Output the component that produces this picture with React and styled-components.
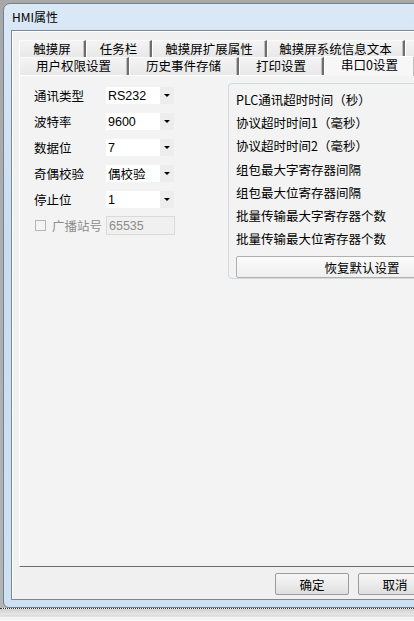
import React from "react";
import styled, { createGlobalStyle } from "styled-components";

const GlobalStyle = createGlobalStyle`
  html, body { margin: 0; padding: 0; }
  body {
    background: #c9c9c9;
    font-family: "Liberation Sans", "Noto Sans CJK SC", sans-serif;
    font-size: 12px;
    color: #000;
  }
`;

const Screen = styled.div`
  width: 414px;
  height: 621px;
  overflow: hidden;
  position: relative;
  background: linear-gradient(#a8a8a8, #b4b4b4);
`;

const Window = styled.div`
  margin: 3px 0 0 3px;
  width: 500px;
  height: 605px;
  box-sizing: border-box;
  border: 1px solid #6f8296;
  border-radius: 7px 7px 6px 6px;
  background: linear-gradient(180deg, #dbe8f6 0%, #c9dcf1 40%, #cfe0f3 100%);
  padding: 0 0 7px 7px;
  display: flex;
  flex-direction: column;
`;

const TitleBar = styled.div`
  height: 26px;
  display: flex;
  align-items: center;
  padding-left: 1px;
  padding-bottom: 2px;
  box-sizing: border-box;
  font-family: "Noto Sans CJK SC", sans-serif;
  font-size: 12px;
`;

const Client = styled.div`
  flex: 1;
  border: 1px solid #7a8797;
  border-right: none;
  background: #f0f0f0;
  padding: 9px 0 0 6px;
  display: flex;
  flex-direction: column;
  box-shadow: inset 1px 1px 0 #ffffff;
`;

const TabRow = styled.div`
  display: flex;
  height: ${(p) => p.h}px;
  align-items: flex-end;
  padding-left: 1px;
`;

const Tab = styled.div`
  width: ${(p) => p.w}px;
  height: ${(p) => (p.selected ? p.h + 2 : p.h)}px;
  box-sizing: border-box;
  flex-shrink: 0;
  display: flex;
  align-items: center;
  justify-content: center;
  font-family: "Noto Sans CJK SC", sans-serif;
  font-size: 12.5px;
  line-height: 1;
  padding-bottom: ${(p) => (p.selected ? 2 : 0)}px;
  background: ${(p) =>
    p.selected ? "#f7f7f7" : "linear-gradient(#f4f4f4, #e8e8e8)"};
  border-left: 1px solid #ffffff;
  border-top: 1px solid ${(p) => (p.selected ? "#fff" : "#fafafa")};
  border-right: 2px solid ${(p) => (p.selected ? "#d8d8d8" : "#6e6e6e")};
  box-shadow: inset -1px 0 0 #c0c0c0;
  margin-bottom: ${(p) => (p.selected ? -1 : 0)}px;
  position: relative;
  z-index: ${(p) => (p.selected ? 2 : 1)};
`;

const Panel = styled.div`
  height: 492px;
  box-sizing: border-box;
  border-left: 1px solid #ffffff;
  border-top: 1px solid #ffffff;
  border-bottom: 1px solid #6c6c6c;
  background: #f3f3f3;
  margin-left: 1px;
  display: flex;
  align-items: flex-start;
  position: relative;
  z-index: 1;
`;

const Form = styled.div`
  margin: 10px 0 0 14px;
  width: 180px;
  display: grid;
  grid-template-columns: 71px 70px;
  row-gap: 7px;
  align-items: center;
  font-family: "Noto Sans CJK SC", sans-serif;
  font-size: 12.5px;
`;

const Label = styled.div`
  height: 19px;
  display: flex;
  align-items: center;
  color: ${(p) => (p.disabled ? "#8d8d8d" : "#000")};
  gap: 6px;
`;

const Select = styled.div`
  height: 19px;
  box-sizing: border-box;
  background: #ffffff;
  border: 1px solid #f3f3f3;
  display: flex;
  align-items: center;
  justify-content: space-between;
  padding-left: 2px;
  font-family: ${(p) =>
    p.cjk ? '"Noto Sans CJK SC", sans-serif' : '"Liberation Sans", sans-serif'};
  font-size: 12.5px;
`;

const DropBtn = styled.div`
  width: 14px;
  height: 17px;
  background: #ededed;
  display: flex;
  align-items: center;
  justify-content: center;
  &::after {
    content: "";
    border-left: 3px solid transparent;
    border-right: 3px solid transparent;
    border-top: 3px solid #000;
  }
`;

const Check = styled.span`
  width: 11px;
  height: 11px;
  box-sizing: border-box;
  border: 1px solid #b5b5b5;
  background: #f4f4f4;
  margin-left: 1px;
`;

const DisabledInput = styled.div`
  height: 19px;
  box-sizing: border-box;
  border: 1px solid #dadada;
  background: #f0f0f0;
  color: #8d8d8d;
  display: flex;
  align-items: center;
  padding-left: 2px;
  font-family: "Liberation Sans", sans-serif;
  font-size: 12.5px;
  margin-left: 1px;
`;

const Group = styled.div`
  margin: 7px 0 0 14px;
  width: 270px;
  height: 196px;
  box-sizing: border-box;
  border: 1px solid #d3d9de;
  border-radius: 4px;
  padding: 4px 0 0 7px;
  font-family: "Noto Sans CJK SC", sans-serif;
  font-size: 12.5px;
  display: flex;
  flex-direction: column;
`;

const Line = styled.div`
  line-height: 23.2px;
  height: 23.2px;
`;

const Button = styled.div`
  width: ${(p) => p.w}px;
  height: 22px;
  box-sizing: border-box;
  border: 1px solid #9c9c9c;
  border-radius: 2px;
  background: linear-gradient(#f6f6f6 0%, #ececec 50%, #dedede 100%);
  display: flex;
  align-items: center;
  justify-content: center;
  font-family: "Noto Sans CJK SC", sans-serif;
  font-size: 12.5px;
  flex-shrink: 0;
`;

const GroupButton = styled(Button)`
  margin-top: 6px;
  background: linear-gradient(#fbfbfb, #efefef);
  border-color: #b0b0b0;
`;

const Footer = styled.div`
  display: flex;
  gap: 9px;
  padding: 6px 0 0 257px;
`;

const Ground = styled.div`
  position: absolute;
  left: 0;
  right: 0;
  top: 608px;
  height: 13px;
  background: linear-gradient(#d0d0d0 0px, #e8e8e8 6px, #cfcfcf 7px, #f4f4f4 8px);
  border-top: 1px dotted #333;
`;

const row1 = [
  ["触摸屏", 67],
  ["任务栏", 66],
  ["触摸屏扩展属性", 115],
  ["触摸屏系统信息文本", 138],
  ["", 60],
];

const row2 = [
  ["用户权限设置", 110],
  ["历史事件存储", 110],
  ["打印设置", 85],
  ["串口0设置", 92, true],
];

const fields = [
  ["通讯类型", "RS232"],
  ["波特率", "9600"],
  ["数据位", "7"],
  ["奇偶校验", "偶校验", true],
  ["停止位", "1"],
];

const lines = [
  "PLC通讯超时时间（秒）",
  "协议超时时间1（毫秒）",
  "协议超时时间2（毫秒）",
  "组包最大字寄存器间隔",
  "组包最大位寄存器间隔",
  "批量传输最大字寄存器个数",
  "批量传输最大位寄存器个数",
];

export default function App() {
  return (
    <Screen>
      <GlobalStyle />
      <Window>
        <TitleBar>HMI属性</TitleBar>
        <Client>
          <TabRow h={17}>
            {row1.map(([t, w], i) => (
              <Tab key={i} w={w} h={17}>
                {t}
              </Tab>
            ))}
          </TabRow>
          <TabRow h={18}>
            {row2.map(([t, w, sel], i) => (
              <Tab key={i} w={w} h={18} selected={sel}>
                {t}
              </Tab>
            ))}
          </TabRow>
          <Panel>
            <Form>
              {fields.map(([l, v, cjk]) => (
                <React.Fragment key={l}>
                  <Label>{l}</Label>
                  <Select cjk={cjk}>
                    {v}
                    <DropBtn />
                  </Select>
                </React.Fragment>
              ))}
              <Label disabled>
                <Check />
                广播站号
              </Label>
              <DisabledInput>65535</DisabledInput>
            </Form>
            <Group>
              {lines.map((l) => (
                <Line key={l}>{l}</Line>
              ))}
              <GroupButton w={252}>恢复默认设置</GroupButton>
            </Group>
          </Panel>
          <Footer>
            <Button w={74}>确定</Button>
            <Button w={74}>取消</Button>
          </Footer>
        </Client>
      </Window>
      <Ground />
    </Screen>
  );
}
